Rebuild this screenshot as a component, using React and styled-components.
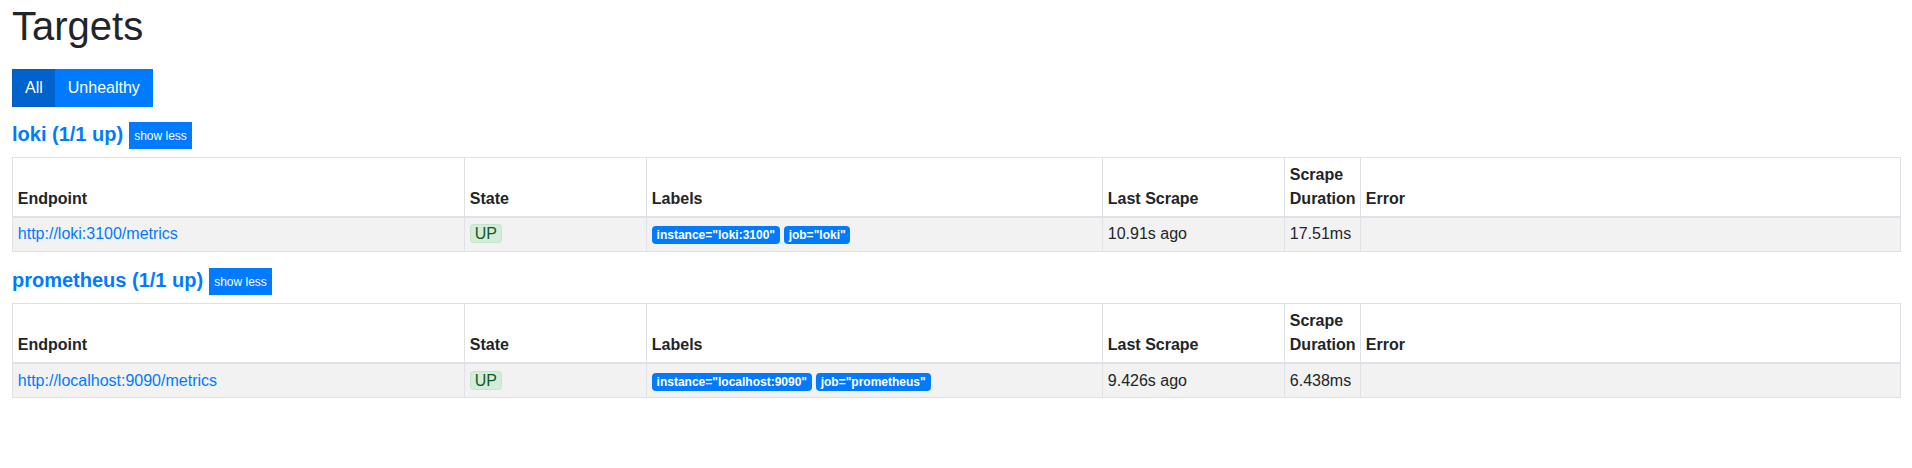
import React, { useState } from 'react';
import styled, { createGlobalStyle } from 'styled-components';

const GlobalStyle = createGlobalStyle`
  *, *::before, *::after {
    box-sizing: border-box;
  }
  body {
    margin: 0;
    background: #fff;
    color: #212529;
    font-family: 'Liberation Sans', Arial, sans-serif;
    font-size: 16px;
    line-height: 1.5;
  }
`;

const pools = [
  {
    job: 'loki',
    endpoint: 'http://loki:3100/metrics',
    labels: [
      ['instance', 'loki:3100'],
      ['job', 'loki'],
    ],
    lastScrape: '10.91s ago',
    duration: '17.51ms',
  },
  {
    job: 'prometheus',
    endpoint: 'http://localhost:9090/metrics',
    labels: [
      ['instance', 'localhost:9090'],
      ['job', 'prometheus'],
    ],
    lastScrape: '9.426s ago',
    duration: '6.438ms',
  },
];

const columns = [
  { title: 'Endpoint', width: 452 },
  { title: 'State', width: 182 },
  { title: 'Labels', width: 456 },
  { title: 'Last Scrape', width: 182 },
  { title: 'Scrape Duration', width: 76 },
  { title: 'Error' },
];

const Page = () => {
  const [filter, setFilter] = useState('all');

  return (
    <Container>
      <GlobalStyle />
      <Title>Targets</Title>
      <FilterGroup>
        <FilterButton active={filter === 'all'} onClick={() => setFilter('all')}>
          All
        </FilterButton>
        <FilterButton
          active={filter === 'unhealthy'}
          onClick={() => setFilter('unhealthy')}
        >
          Unhealthy
        </FilterButton>
      </FilterGroup>
      {pools.map(pool => (
        <Pool key={pool.job} {...pool} />
      ))}
    </Container>
  );
};

const Pool = ({ job, endpoint, labels, lastScrape, duration }) => {
  const [open, setOpen] = useState(true);

  return (
    <section>
      <PoolHeading>
        <PoolLink href={`#job-${job}`}>{job} (1/1 up)</PoolLink>
        <ToggleButton onClick={() => setOpen(!open)}>
          {open ? 'show less' : 'show more'}
        </ToggleButton>
      </PoolHeading>
      {open && (
        <Table>
          <thead>
            <tr>
              {columns.map(col => (
                <Th key={col.title} style={col.width ? { width: col.width } : null}>
                  {col.title}
                </Th>
              ))}
            </tr>
          </thead>
          <tbody>
            <Row>
              <Td>
                <EndpointLink href={endpoint}>{endpoint}</EndpointLink>
              </Td>
              <Td>
                <StateBadge>UP</StateBadge>
              </Td>
              <Td>
                {labels.map(([k, v]) => (
                  <LabelBadge key={k}>{`${k}="${v}"`}</LabelBadge>
                ))}
              </Td>
              <Td>{lastScrape}</Td>
              <Td>{duration}</Td>
              <Td />
            </Row>
          </tbody>
        </Table>
      )}
    </section>
  );
};

const Container = styled.div`
  padding: 0 11px 0 12px;
`;

const Title = styled.h1`
  margin: 2px 0 19px;
  font-size: 40px;
  font-weight: 400;
  line-height: 1.2;
  color: #212529;
`;

const FilterGroup = styled.div`
  display: flex;
  margin-bottom: 15px;
`;

const FilterButton = styled.button`
  padding: 6px 12px;
  border: 1px solid ${p => (p.active ? '#005cbf' : '#007bff')};
  border-radius: 0;
  background: ${p => (p.active ? '#0062cc' : '#007bff')};
  color: #fff;
  font-family: inherit;
  font-size: 16px;
  line-height: 1.5;
  cursor: pointer;

  & + & {
    margin-left: -1px;
  }
`;

const PoolHeading = styled.h5`
  display: flex;
  align-items: flex-start;
  gap: 6px;
  margin: 0 0 8px;
  font-size: 20px;
  font-weight: 700;
  line-height: 1.2;
`;

const PoolLink = styled.a`
  color: #007bff;
  text-decoration: none;
`;

const ToggleButton = styled.button`
  padding: 3.5px 4px;
  border: 1px solid #007bff;
  border-radius: 0;
  background: #007bff;
  color: #fff;
  font-family: inherit;
  font-size: 12px;
  font-weight: 400;
  line-height: 1.5;
  cursor: pointer;
`;

const Table = styled.table`
  width: 100%;
  margin-bottom: 16px;
  border-collapse: collapse;
  table-layout: fixed;
  border: 1px solid #dee2e6;
  color: #212529;
`;

const Th = styled.th`
  padding: 4.8px;
  border: 1px solid #dee2e6;
  border-bottom-width: 2px;
  text-align: left;
  vertical-align: bottom;
  font-weight: 700;
`;

const Row = styled.tr`
  background: #f2f2f2;
`;

const Td = styled.td`
  padding: 4.8px;
  border: 1px solid #dee2e6;
  vertical-align: top;
`;

const EndpointLink = styled.a`
  color: #007bff;
  text-decoration: none;
`;

const StateBadge = styled.span`
  padding: 0 4px;
  border: 1px solid #c3e6cb;
  border-radius: 4px;
  background: #d4edda;
  color: #155724;
  text-transform: uppercase;
`;

const LabelBadge = styled.span`
  display: inline-block;
  margin-right: 4px;
  padding: 3px 4.8px;
  border-radius: 4px;
  background: #007bff;
  color: #fff;
  font-size: 12px;
  font-weight: 700;
  line-height: 1;
  vertical-align: baseline;
  white-space: nowrap;
`;

export default Page;
